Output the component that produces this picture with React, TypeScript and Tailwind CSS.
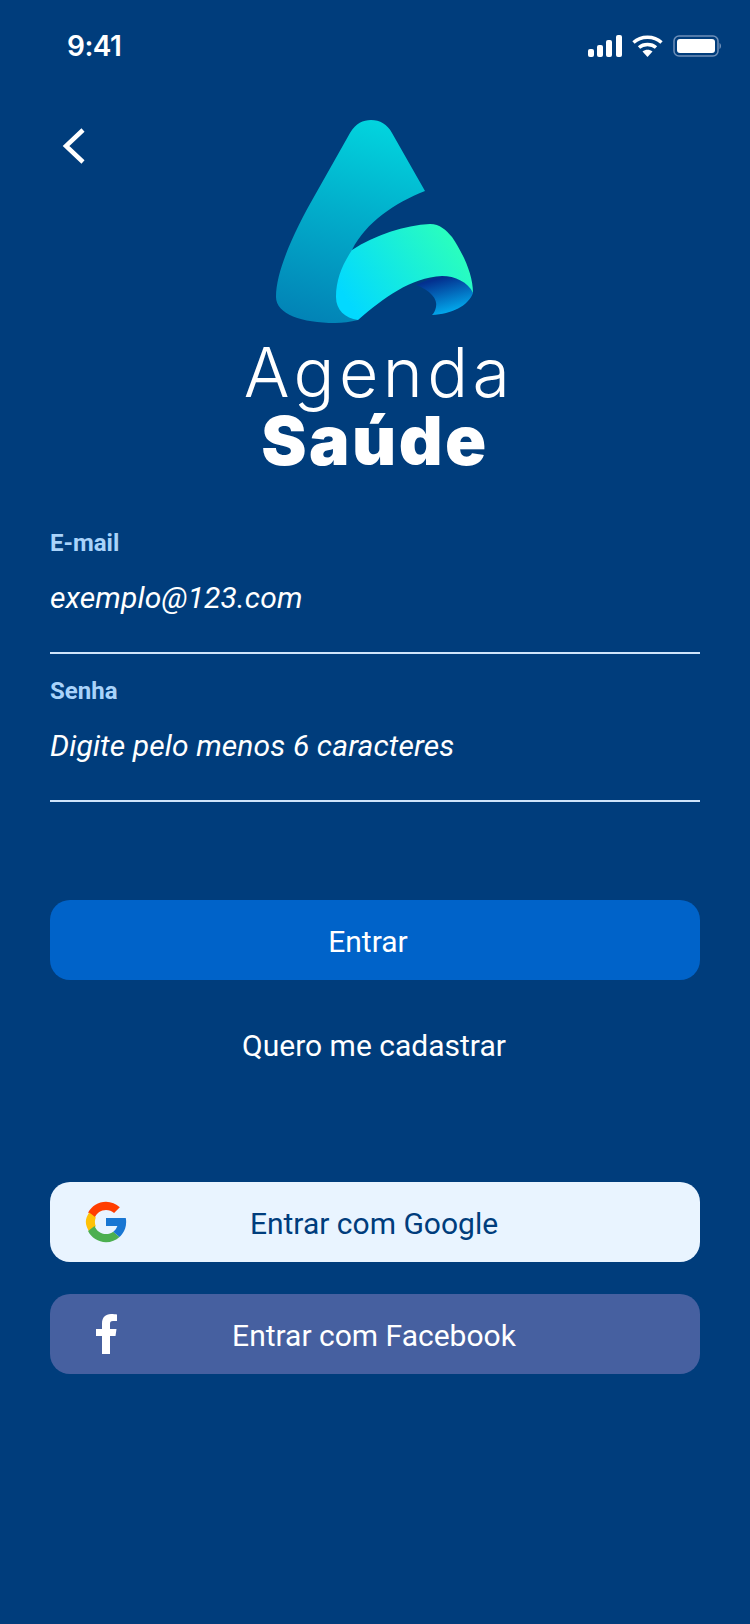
import React from 'react';

const roboto = "font-['Roboto',sans-serif]";

const StatusBar = () => (
  <div className="flex h-[92px] items-center justify-between pl-[67px] pr-[29px]">
    <span className="font-['Inter',sans-serif] text-[28px] font-semibold tracking-[-0.5px] text-white">9:41</span>
    <div className="flex items-center gap-[10px]">
      <svg width="34" height="22" viewBox="0 0 34 22" fill="white">
        <rect x="0" y="14" width="6" height="8" rx="2" />
        <rect x="9" y="10" width="6" height="12" rx="2" />
        <rect x="18" y="5" width="6" height="17" rx="2" />
        <rect x="28" y="0" width="6" height="22" rx="2" />
      </svg>
      <svg width="31" height="22" viewBox="0 0 31 22" fill="none" stroke="white" strokeWidth="3.4">
        <path d="M1.500 7.500 C9 .5 22 .5 29.500 7.500" />
        <path d="M7 12.500 C11.500 8.500 19.500 8.500 24 12.500" />
        <path d="M15.500 22 L10.500 16.500 C13.500 14.300 17.500 14.300 20.500 16.500 Z" fill="white" stroke="none" />
      </svg>
      <svg width="48" height="22" viewBox="0 0 48 22" fill="none">
        <rect x="1" y="1" width="44" height="20" rx="5" stroke="#6d8fb8" strokeWidth="1.500" />
        <rect x="4" y="4" width="38" height="14" rx="3" fill="white" />
        <path d="M46.500 8 C48.500 9 48.500 13 46.500 14 Z" fill="#6d8fb8" />
      </svg>
    </div>
  </div>
);

const Logo = () => (
  <svg width="290" height="240" viewBox="0 0 290 240">
    <defs>
      <linearGradient id="back" x1="140" y1="20" x2="85" y2="223" gradientUnits="userSpaceOnUse">
        <stop offset="0" stopColor="#02d4de" />
        <stop offset="0.45" stopColor="#02aecb" />
        <stop offset="1" stopColor="#0283b6" />
      </linearGradient>
      <linearGradient id="front" x1="225" y1="135" x2="120" y2="205" gradientUnits="userSpaceOnUse">
        <stop offset="0" stopColor="#2bffbc" />
        <stop offset="1" stopColor="#02d9ff" />
      </linearGradient>
      <linearGradient id="under" x1="212" y1="178" x2="222" y2="215" gradientUnits="userSpaceOnUse">
        <stop offset="0" stopColor="#03308f" />
        <stop offset="1" stopColor="#02b4f5" />
      </linearGradient>
    </defs>
    <path
      d="M120 33 C126 23 133 20 141 20 C150 20 157 24 162 33 L195 91 C165 103 136 122 122 150 L128 220 C120 222 113 223 105 223 C72 223 46 214 46 197 C46 170 65 130 85 95 Z"
      fill="url(#back)"
    />
    <path
      d="M186 185 C200 190 208 199 206 207 C205 211 204 213 202 215 C222 214 238 206 243 193 C240 182 225 176 212 176 C203 177 195 181 186 185 Z"
      fill="url(#under)"
    />
    <path
      d="M122 150 C145 135 175 125 200 124 C210 124 216 130 222 137 C232 152 243 173 243 193 C238 182 225 176 212 176 C180 178 155 197 128 220 C115 218 106 210 106 197 C106 180 112 165 122 150 Z"
      fill="url(#front)"
    />
  </svg>
);

const Field = ({ label, hint }: { label: string; hint: string }) => (
  <div className="flex h-[148px] flex-col border-b-2 border-[#cfe4fb]">
    <span className={`${roboto} mt-[24px] text-[24px] leading-[26px] font-bold text-[#a9d3fa]`}>{label}</span>
    <span className={`${roboto} mt-[24px] text-[30px] leading-[36px] font-normal tracking-[0.12px] text-white italic`}>{hint}</span>
  </div>
);

export default function App() {
  return (
    <div className="flex h-[1624px] w-[750px] flex-col overflow-hidden bg-[#003d7c]">
      <StatusBar />

      <div className="mt-[8px] grid h-[240px] grid-cols-[1fr_290px_1fr]">
        <div className="pl-[62px] pt-[28px]">
          <svg width="24" height="36" viewBox="0 0 24 36" fill="none" stroke="white" strokeWidth="4.500">
            <path d="M21 2 L4 18 L21 34" />
          </svg>
        </div>
        <Logo />
      </div>

      <div className="mt-[-2px] flex flex-col items-center font-['Inter',sans-serif] text-white">
        <span className="pl-[8px] text-[68px] leading-[69px] font-light tracking-[4.4px]">Agenda</span>
        <span className="text-[68px] leading-[66px] font-black tracking-[2.5px]">Saúde</span>
      </div>

      <div className="mt-[33px] flex flex-col px-[50px]">
        <Field label="E-mail" hint="exemplo@123.com" />
        <Field label="Senha" hint="Digite pelo menos 6 caracteres" />

        <button className={`${roboto} mt-[98px] h-[80px] rounded-[20px] bg-[#0063c9] pt-[2px] pr-[14px] text-[30px] text-white`}>
          Entrar
        </button>
        <button className={`${roboto} mt-[46px] h-[40px] pr-[2px] text-[30px] leading-[40px] text-white`}>Quero me cadastrar</button>

        <button className={`${roboto} mt-[116px] grid h-[80px] grid-cols-[1fr_auto_1fr] items-center rounded-[20px] bg-[#e9f4ff] pr-[2px] text-[30px] text-[#003d7c]`}>
          <svg className="ml-[34px]" width="44" height="44" viewBox="0 0 48 48">
            <path fill="#FF3D00" d="M6.300 14.700l6.600 4.800C14.700 15.100 19 12 24 12c3.100 0 5.800 1.200 8 3l5.700-5.700C34 6.100 29.300 4 24 4 16.300 4 9.700 8.300 6.300 14.700z" transform="translate(-2.400 -2.400) scale(1.100)" />
            <path fill="#FFC107" d="M13 24c0-1.600.3-3 .9-4.500l-6.600-4.800C5.200 18 4 20.900 4 24s1.200 6 3.300 9.300l6.600-5C13.300 27 13 25.600 13 24z" transform="translate(-2.400 -2.400) scale(1.100)" />
            <path fill="#4CAF50" d="M24 44c5.200 0 9.900-2 13.400-5.200l-6.200-5.200C29.200 35.100 26.700 36 24 36c-5.200 0-9.600-3.300-11.300-8l-6.500 5C9.500 39.600 16.200 44 24 44z" transform="translate(-2.400 -2.400) scale(1.100)" />
            <path fill="#1976D2" d="M43.600 20H24v8h11.300c-.8 2.200-2.200 4.200-4.100 5.600l6.200 5.200C37 39.200 44 34 44 24c0-1.300-.1-2.700-.4-4z" transform="translate(-2.400 -2.400) scale(1.100)" />
          </svg>
          <span className="mt-[2px]">Entrar com Google</span>
        </button>

        <button className={`${roboto} mt-[32px] grid h-[80px] grid-cols-[1fr_auto_1fr] items-center rounded-[20px] bg-[#4660a0] pr-[2px] text-[30px] text-white`}>
          <svg className="ml-[46px]" width="21" height="40" viewBox="0 0 21 40" fill="white">
            <path d="M6 40 V22 H0 V15 H6 V9.500 C6 3.500 9.500 0 15 0 C17.500 0 19.500 .2 21 .5 V7 H17 C14.500 7 14 8.300 14 10 V15 H20.500 L19.500 22 H14 V40 Z" />
          </svg>
          <span className="mt-[2px]">Entrar com Facebook</span>
        </button>
      </div>
    </div>
  );
}
